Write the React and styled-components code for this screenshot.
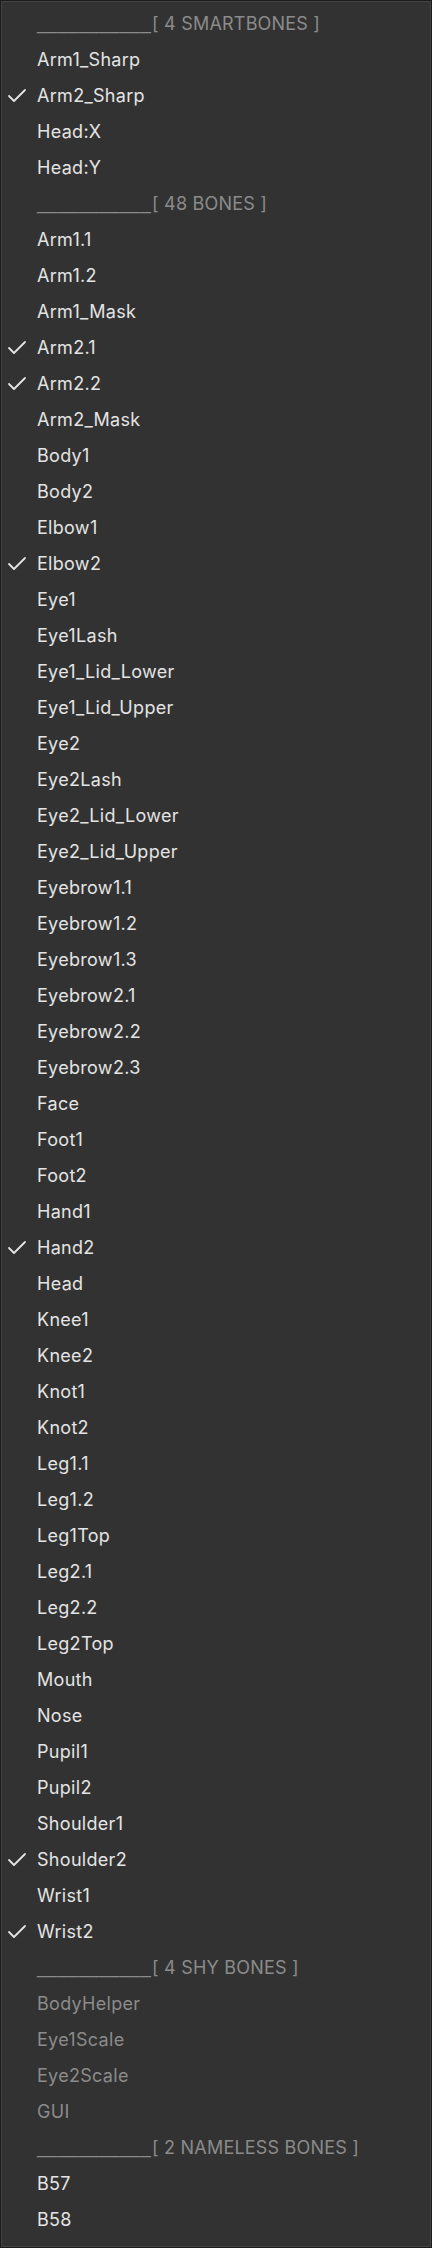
import React from 'react';
import styled, { createGlobalStyle } from 'styled-components';

const GlobalStyle = createGlobalStyle`
    html, body {
        margin: 0;
        padding: 0;
        background: #323232;
    }
`;

const Menu = styled.ul`
    box-sizing: border-box;
    list-style: none;
    margin: 0;
    padding: 4px 0 10px 0;
    width: 432px;
    min-height: 2248px;
    background: #323232;
    border: 1px solid #1b1b1b;
    box-shadow: inset 0 0 0 1px #424242;
    font-family: Inter, "Liberation Sans", sans-serif;
    font-size: 18px;
    letter-spacing: 0.3px;
`;

const Row = styled.li`
    display: flex;
    align-items: center;
    height: 36px;
    padding-left: 36px;
    position: relative;
    color: ${({ $dim }) => ($dim ? '#8b8b8b' : '#e4e4e4')};
    white-space: nowrap;
`;

const Check = styled.svg`
    position: absolute;
    left: 6px;
    top: 11px;
    width: 20px;
    height: 15px;
`;

// separator line is typed as underscores in the menu label
const Rule = styled.span`
    flex: none;
    margin-right: 1px;
    font-family: "Liberation Sans", Arial, sans-serif;
    letter-spacing: 0.36px;
    color: #8b8b8b;
`;

const Heading = styled.span`
    color: #8b8b8b;
    letter-spacing: 0.2px;
`;

const groups = [
    {
        title: '[ 4 SMARTBONES ]',
        items: [['Arm1_Sharp'], ['Arm2_Sharp', true], ['Head:X'], ['Head:Y']],
    },
    {
        title: '[ 48 BONES ]',
        items: [
            ['Arm1.1'], ['Arm1.2'], ['Arm1_Mask'], ['Arm2.1', true], ['Arm2.2', true],
            ['Arm2_Mask'], ['Body1'], ['Body2'], ['Elbow1'], ['Elbow2', true],
            ['Eye1'], ['Eye1Lash'], ['Eye1_Lid_Lower'], ['Eye1_Lid_Upper'], ['Eye2'],
            ['Eye2Lash'], ['Eye2_Lid_Lower'], ['Eye2_Lid_Upper'], ['Eyebrow1.1'], ['Eyebrow1.2'],
            ['Eyebrow1.3'], ['Eyebrow2.1'], ['Eyebrow2.2'], ['Eyebrow2.3'], ['Face'],
            ['Foot1'], ['Foot2'], ['Hand1'], ['Hand2', true], ['Head'],
            ['Knee1'], ['Knee2'], ['Knot1'], ['Knot2'], ['Leg1.1'],
            ['Leg1.2'], ['Leg1Top'], ['Leg2.1'], ['Leg2.2'], ['Leg2Top'],
            ['Mouth'], ['Nose'], ['Pupil1'], ['Pupil2'], ['Shoulder1'],
            ['Shoulder2', true], ['Wrist1'], ['Wrist2', true],
        ],
    },
    {
        title: '[ 4 SHY BONES ]',
        dim: true,
        items: [['BodyHelper'], ['Eye1Scale'], ['Eye2Scale'], ['GUI']],
    },
    {
        title: '[ 2 NAMELESS BONES ]',
        items: [['B57'], ['B58']],
    },
];

const CheckMark = () => (
    <Check viewBox="0 0 20 15">
        <polyline
            points="2,8 7,13 18,2"
            fill="none"
            stroke="#e4e4e4"
            strokeWidth="1.8"
            strokeLinecap="round"
            strokeLinejoin="round"
        />
    </Check>
);

const App = () => (
    <>
        <GlobalStyle />
        <Menu>
            {groups.map((group) => (
                <React.Fragment key={group.title}>
                    <Row>
                        <Rule>___________</Rule>
                        <Heading>{group.title}</Heading>
                    </Row>
                    {group.items.map(([name, checked]) => (
                        <Row key={name} $dim={group.dim}>
                            {checked ? <CheckMark /> : null}
                            {name}
                        </Row>
                    ))}
                </React.Fragment>
            ))}
        </Menu>
    </>
);

export default App;
